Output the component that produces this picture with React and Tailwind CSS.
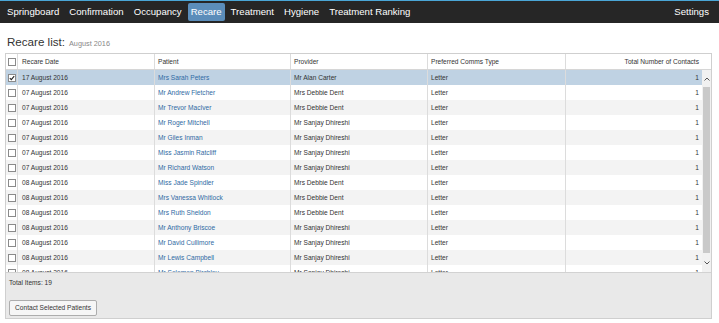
const navItems = ["Springboard", "Confirmation", "Occupancy", "Recare", "Treatment", "Hygiene", "Treatment Ranking"];

const rows = [
  ["17 August 2016", "Mrs Sarah Peters", "Mr Alan Carter"],
  ["07 August 2016", "Mr Andrew Fletcher", "Mrs Debbie Dent"],
  ["07 August 2016", "Mr Trevor MacIver", "Mrs Debbie Dent"],
  ["07 August 2016", "Mr Roger Mitchell", "Mr Sanjay Dhireshi"],
  ["07 August 2016", "Mr Giles Inman", "Mr Sanjay Dhireshi"],
  ["07 August 2016", "Miss Jasmin Ratcliff", "Mr Sanjay Dhireshi"],
  ["07 August 2016", "Mr Richard Watson", "Mr Sanjay Dhireshi"],
  ["08 August 2016", "Miss Jade Spindler", "Mrs Debbie Dent"],
  ["08 August 2016", "Mrs Vanessa Whitlock", "Mrs Debbie Dent"],
  ["08 August 2016", "Mrs Ruth Sheldon", "Mrs Debbie Dent"],
  ["08 August 2016", "Mr Anthony Briscoe", "Mr Sanjay Dhireshi"],
  ["08 August 2016", "Mr David Cullimore", "Mr Sanjay Dhireshi"],
  ["08 August 2016", "Mr Lewis Campbell", "Mr Sanjay Dhireshi"],
  ["08 August 2016", "Mr Solomon Birchley", "Mr Sanjay Dhireshi"],
];

function Check({ checked }) {
  return (
    <span className="w-[8px] h-[8px] border border-[#8a8a8a] bg-white flex items-center justify-center">
      {checked && (
        <svg width="6" height="6" viewBox="0 0 6 6">
          <path d="M0.8 3.1 L2.3 4.6 L5.2 1.2" fill="none" stroke="#222" strokeWidth="1.1" />
        </svg>
      )}
    </span>
  );
}

export default function App() {
  return (
    <div className="w-[719px] h-[323px] bg-white overflow-hidden font-['Liberation_Sans',Arial,sans-serif] text-[#333]">
      {/* top nav */}
      <div className="h-[23px] bg-[#262626] border-t border-[#4aa6d6] flex items-center justify-between pl-[3px] pr-[10px] text-white text-[9.6px]">
        <div className="flex items-center gap-[2px]">
          {navItems.map((item) => (
            <span
              key={item}
              className={
                item === "Recare"
                  ? "px-[3px] h-[18px] flex items-center rounded-[2px] bg-[#5b8dba]"
                  : "px-[4px] h-[18px] flex items-center"
              }
            >
              {item}
            </span>
          ))}
        </div>
        <span>Settings</span>
      </div>

      <div className="mt-[12px] mb-[4px] ml-[7px] h-[14px] flex items-baseline gap-[4px] leading-[14px]">
        <span className="text-[11.6px] text-[#333]">Recare list:</span>
        <span className="text-[7.3px] text-[#888]">August 2016</span>
      </div>

      <div className="ml-[5px] w-[707px] border border-[#cfcfcf] text-[6.6px]">
        {/* header */}
        <div className="flex h-[16px] border-b border-[#d6d6d6] text-[#333]">
          <div className="w-[12px] border-r border-[#dcdcdc] flex items-center justify-center">
            <Check />
          </div>
          <div className="w-[137px] border-r border-[#dcdcdc] flex items-center pl-[4px]">Recare Date</div>
          <div className="w-[136px] border-r border-[#dcdcdc] flex items-center pl-[3px]">Patient</div>
          <div className="w-[137px] border-r border-[#dcdcdc] flex items-center pl-[3px]">Provider</div>
          <div className="w-[138px] border-r border-[#dcdcdc] flex items-center pl-[3px]">Preferred Comms Type</div>
          <div className="flex-1 flex items-center justify-end pr-[12px]">Total Number of Contacts</div>
        </div>

        {/* body */}
        <div className="flex h-[202px] overflow-hidden">
          <div className="flex-1">
            {rows.map((r, i) => (
              <div
                key={i}
                className={
                  "flex h-[15px] " +
                  (i === 0 ? "bg-[#bfd2e3]" : i % 2 === 0 ? "bg-[#f3f3f3]" : "bg-white")
                }
              >
                <div className="w-[12px] border-r border-[#dcdcdc] flex items-center justify-center">
                  <Check checked={i === 0} />
                </div>
                <div className="w-[137px] border-r border-[#dcdcdc] flex items-center pl-[4px]">{r[0]}</div>
                <div className="w-[136px] border-r border-[#dcdcdc] flex items-center pl-[3px] text-[#2f6aa3]">{r[1]}</div>
                <div className="w-[137px] border-r border-[#dcdcdc] flex items-center pl-[3px]">{r[2]}</div>
                <div className="w-[138px] border-r border-[#dcdcdc] flex items-center pl-[3px]">Letter</div>
                <div className="flex-1 flex items-center justify-end pr-[3px]">1</div>
              </div>
            ))}
          </div>
          {/* scrollbar */}
          <div className="w-[9px] bg-[#f1f1f1] flex flex-col items-center">
            <div className="h-[17px] flex items-center justify-center">
              <svg width="6" height="4" viewBox="0 0 6 4">
                <path d="M0.5 3.5 L3 1 L5.5 3.5" fill="none" stroke="#555" strokeWidth="1" />
              </svg>
            </div>
            <div className="w-[7px] flex-1 bg-[#c9c9c9]" />
            <div className="h-[19px] flex items-center justify-center">
              <svg width="6" height="4" viewBox="0 0 6 4">
                <path d="M0.5 0.5 L3 3 L5.5 0.5" fill="none" stroke="#555" strokeWidth="1" />
              </svg>
            </div>
          </div>
        </div>

        {/* footer */}
        <div className="h-[46px] bg-[#e9e9e9] border-t border-[#d2d2d2] pl-[3px] pt-[6px]">
          <div className="leading-[8px]">Total Items: 19</div>
          <button className="mt-[13px] w-[88px] h-[16px] border border-[#adadad] rounded-[2px] bg-[#f6f6f6] text-[6.6px] text-[#333] flex items-center justify-center">
            Contact Selected Patients
          </button>
        </div>
      </div>
    </div>
  );
}
